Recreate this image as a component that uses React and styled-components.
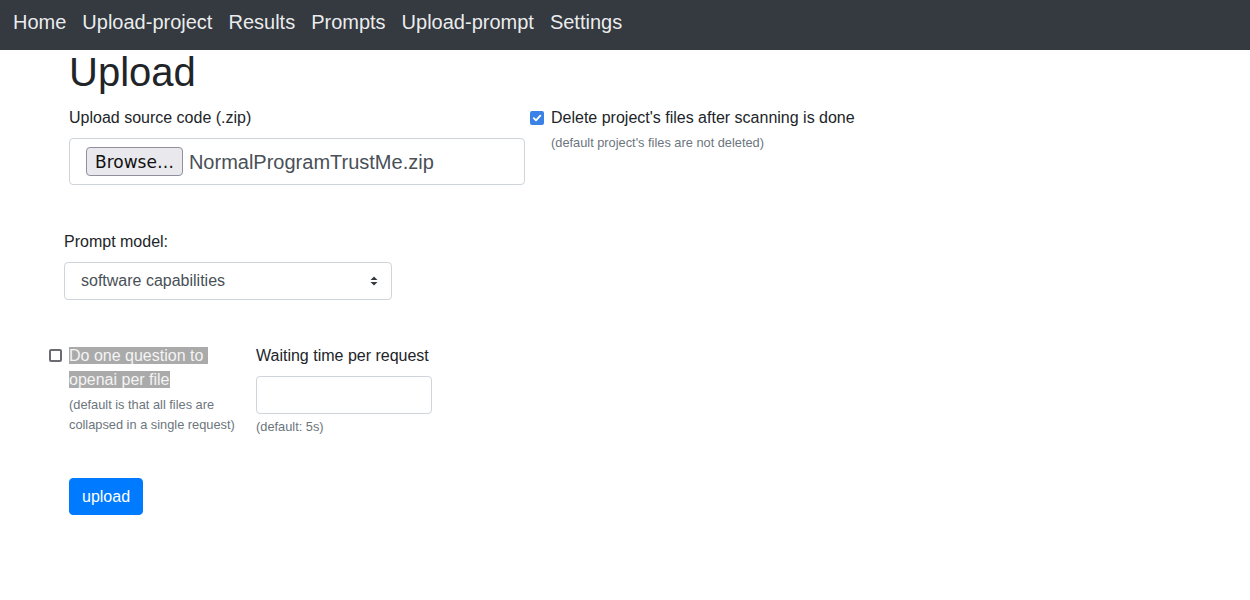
import React from 'react';
import styled, { createGlobalStyle } from 'styled-components';

const links = ['Home', 'Upload-project', 'Results', 'Prompts', 'Upload-prompt', 'Settings'];

function CheckBox({ checked }) {
  return (
    <Box $checked={checked}>
      {checked && (
        <svg width="10" height="10" viewBox="0 0 10 10">
          <path d="M1.8 5.2 L4 7.3 L8.3 2.6" fill="none" stroke="#fff" strokeWidth="1.8" strokeLinecap="round" strokeLinejoin="round" />
        </svg>
      )}
    </Box>
  );
}

function App() {
  return (
    <>
      <GlobalStyle />
      <Nav>
        {links.map((l) => <NavLink key={l}>{l}</NavLink>)}
      </Nav>
      <Main>
        <Title>Upload</Title>
        <TopRow>
          <FileColumn>
            <Label>Upload source code (.zip)</Label>
            <FileBox>
              <BrowseButton>Browse…</BrowseButton>
              <FileName>NormalProgramTrustMe.zip</FileName>
            </FileBox>
          </FileColumn>
          <div>
            <CheckLine>
              <CheckBox checked />
              <CheckText>Delete project's files after scanning is done</CheckText>
            </CheckLine>
            <Hint $indent={21}>(default project's files are not deleted)</Hint>
          </div>
        </TopRow>

        <ModelSection>
          <Label>Prompt model:</Label>
          <Select>
            <span>software capabilities</span>
            <svg width="8" height="12" viewBox="0 0 8 12">
              <path d="M4 1.5 L7.5 5 H0.5 Z M4 10.5 L7.5 7 H0.5 Z" fill="#343a40" />
            </svg>
          </Select>
        </ModelSection>

        <OptionsRow>
          <OptionColumn>
            <CheckLine $top>
              <CheckBox />
              <CheckText>
                <Selected>Do one question to{'\u00a0'}</Selected>
                <br />
                <Selected>openai per file</Selected>
              </CheckText>
            </CheckLine>
            <Hint $indent={20}>
              (default is that all files are
              <br />
              collapsed in a single request)
            </Hint>
          </OptionColumn>
          <div>
            <Label>Waiting time per request</Label>
            <TextInput />
            <Hint>(default: 5s)</Hint>
          </div>
        </OptionsRow>

        <SubmitButton>upload</SubmitButton>
      </Main>
    </>
  );
}

const GlobalStyle = createGlobalStyle`
  body {
    margin: 0;
    font-family: "Liberation Sans", Arial, sans-serif;
    font-size: 16px;
    line-height: 24px;
    color: #212529;
    background: #fff;
  }
`;

const Nav = styled.nav`
  height: 50px;
  background: #343a40;
  display: flex;
  align-items: center;
  padding: 0 5px 6px;
  box-sizing: border-box;
`;

const NavLink = styled.a`
  font-size: 20px;
  padding: 0 8px;
  color: rgba(255, 255, 255, 0.92);
`;

const Main = styled.div`
  padding-left: 49px;
`;

const Title = styled.h1`
  margin: 0 0 12px 20px;
  font-size: 40px;
  font-weight: 500;
  line-height: 44px;
`;

const TopRow = styled.div`
  display: flex;
  padding-left: 20px;
  gap: 5px;
`;

const FileColumn = styled.div`
  width: 456px;
`;

const Label = styled.div`
  margin-bottom: 8px;
`;

const FileBox = styled.div`
  height: 47px;
  box-sizing: border-box;
  border: 1px solid #ced4da;
  border-radius: 4px;
  display: flex;
  align-items: center;
  padding: 0 16px;
  gap: 6px;
`;

const BrowseButton = styled.span`
  height: 29px;
  box-sizing: border-box;
  display: flex;
  align-items: center;
  padding: 0 8px;
  font-family: "DejaVu Sans", sans-serif;
  font-size: 17px;
  color: #111;
  background: #e9e9ed;
  border: 1px solid #8f8f9d;
  border-radius: 4px;
`;

const FileName = styled.span`
  font-size: 20px;
  color: #495057;
`;

const CheckLine = styled.div`
  display: flex;
  align-items: ${(p) => (p.$top ? 'flex-start' : 'center')};
  gap: 7px;
`;

const Box = styled.span`
  flex: none;
  width: ${(p) => (p.$checked ? '14px' : '13px')};
  height: ${(p) => (p.$checked ? '14px' : '13px')};
  margin-top: ${(p) => (p.$checked ? '0' : '5px')};
  box-sizing: border-box;
  border-radius: 2px;
  display: flex;
  align-items: center;
  justify-content: center;
  background: ${(p) => (p.$checked ? '#3b82e6' : '#fff')};
  border: ${(p) => (p.$checked ? 'none' : '2px solid #6b6b73')};
`;

const CheckText = styled.div``;

const Selected = styled.span`
  background: #aaaaaa;
  color: #f4f4f4;
`;

const Hint = styled.div`
  margin-top: 3px;
  padding-left: ${(p) => p.$indent || 0}px;
  font-size: 12.8px;
  line-height: 20px;
  color: #6c757d;
`;

const ModelSection = styled.div`
  margin: 45px 0 0 15px;
`;

const Select = styled.div`
  width: 328px;
  height: 38px;
  box-sizing: border-box;
  border: 1px solid #ced4da;
  border-radius: 4px;
  display: flex;
  align-items: center;
  justify-content: space-between;
  padding: 0 13px 0 16px;
  color: #495057;
`;

const OptionsRow = styled.div`
  display: flex;
  margin-top: 44px;
`;

const OptionColumn = styled.div`
  width: 207px;
`;

const TextInput = styled.div`
  width: 176px;
  height: 38px;
  box-sizing: border-box;
  border: 1px solid #ced4da;
  border-radius: 4px;
`;

const SubmitButton = styled.button`
  margin: 41px 0 0 20px;
  height: 37px;
  padding: 0 12px;
  font-family: inherit;
  font-size: 16px;
  color: #fff;
  background: #007bff;
  border: 1px solid #007bff;
  border-radius: 4px;
`;

export default App;
